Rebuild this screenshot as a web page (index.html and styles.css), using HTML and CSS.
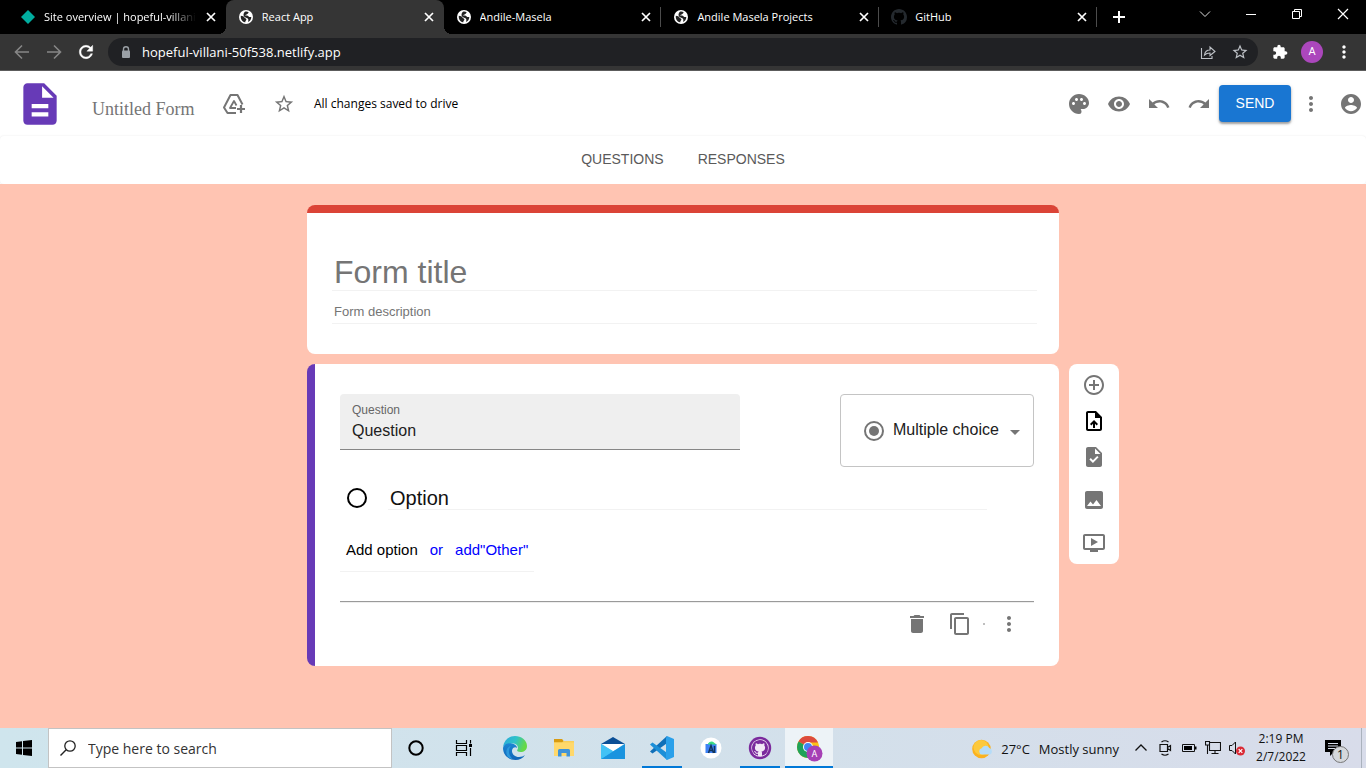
FILE: index.html
```
<!DOCTYPE html>
<html lang="en">
<head>
<meta charset="utf-8">
<meta name="viewport" content="width=device-width, initial-scale=1">
<title>React App</title>
<link rel="stylesheet" href="styles.css">
</head>
<body class="desktop">
<svg class="sprite" aria-hidden="true">
  <symbol id="i-globe" viewBox="0 0 14 14"><circle cx="7" cy="7" r="7" fill="#fff"/><path d="M1.800 5.800 C3.500 6 5 6.400 5.400 7.400 C6 8.200 7.600 8.200 7.400 9.600 C7.200 10.600 6.200 11 6.200 12.400 C3.400 12 1.400 9.400 1.800 5.800Z" fill="#222"/><path d="M5.600 1.900 C7 1.400 8.600 1.600 9.600 2.200 C9.600 3.200 8.800 3.400 8.200 4 C7.600 4.800 6.200 4.600 6.200 5.600 C7.600 5.600 9 5.400 9.600 6.400 C10.200 7.200 11 7.200 12.300 7 C12.300 9.400 10.800 11.400 9 12 C9.400 10.600 9.600 9.600 8.800 8.600 C7.600 7.800 5.600 7.600 4.800 6 C4.200 4.600 4.600 3 5.600 1.900Z" fill="#222"/></symbol>
  <symbol id="i-x" viewBox="0 0 12 12"><path d="M2 2l8 8M10 2l-8 8" stroke="currentColor" stroke-width="1.700" fill="none"/></symbol>
  <symbol id="i-github" viewBox="0 0 16 16"><path fill="currentColor" d="M8 0C3.58 0 0 3.58 0 8c0 3.54 2.29 6.53 5.47 7.59.4.07.55-.17.55-.38 0-.19-.01-.82-.01-1.49-2.01.37-2.53-.49-2.69-.94-.09-.23-.48-.94-.82-1.13-.28-.15-.68-.52-.01-.53.63-.01 1.08.58 1.23.82.72 1.21 1.87.87 2.33.66.07-.52.28-.87.51-1.07-1.78-.2-3.64-.89-3.64-3.95 0-.87.31-1.59.82-2.15-.08-.2-.36-1.02.08-2.12 0 0 .67-.21 2.2.82.64-.18 1.32-.27 2-.27.68 0 1.36.09 2 .27 1.53-1.04 2.2-.82 2.2-.82.44 1.1.16 1.92.08 2.12.51.56.82 1.27.82 2.15 0 3.07-1.87 3.75-3.65 3.95.29.25.54.73.54 1.48 0 1.07-.01 1.93-.01 2.2 0 .21.15.46.55.38A8.013 8.013 0 0016 8c0-4.42-3.58-8-8-8z"/></symbol>
  <symbol id="i-star" viewBox="0 0 24 24"><path fill="currentColor" d="M22 9.24l-7.19-.62L12 2 9.19 8.63 2 9.24l5.46 4.73L5.82 21 12 17.27 18.18 21l-1.63-7.03L22 9.24zM12 15.4l-3.76 2.27 1-4.28-3.32-2.88 4.38-.38L12 6.1l1.71 4.04 4.38.38-3.32 2.88 1 4.28L12 15.4z"/></symbol>
  <symbol id="i-more" viewBox="0 0 24 24"><path fill="currentColor" d="M12 8c1.1 0 2-.9 2-2s-.9-2-2-2-2 .9-2 2 .9 2 2 2zm0 2c-1.1 0-2 .9-2 2s.9 2 2 2 2-.9 2-2-.9-2-2-2zm0 6c-1.1 0-2 .9-2 2s.9 2 2 2 2-.9 2-2-.9-2-2-2z"/></symbol>
</svg>

<div class="tabstrip">
  <div class="tabs">
    <div class="tab">
      <svg class="favicon" viewBox="0 0 16 16"><path d="M8 0l8 8-8 8-8-8z" fill="#00ad9f"/></svg>
      <span class="tab-title tab-title-fade">Site overview | hopeful-villani</span>
      <button class="tab-close" aria-label="Close tab"><svg class="ico12"><use href="#i-x"/></svg></button>
    </div>
    <div class="tab tab-active">
      <svg class="favicon"><use href="#i-globe"/></svg>
      <span class="tab-title">React App</span>
      <button class="tab-close" aria-label="Close tab"><svg class="ico12"><use href="#i-x"/></svg></button>
    </div>
    <div class="tab tab-divided">
      <svg class="favicon"><use href="#i-globe"/></svg>
      <span class="tab-title">Andile-Masela</span>
      <button class="tab-close" aria-label="Close tab"><svg class="ico12"><use href="#i-x"/></svg></button>
    </div>
    <div class="tab tab-divided">
      <svg class="favicon"><use href="#i-globe"/></svg>
      <span class="tab-title">Andile Masela Projects</span>
      <button class="tab-close" aria-label="Close tab"><svg class="ico12"><use href="#i-x"/></svg></button>
    </div>
    <div class="tab tab-divided">
      <svg class="favicon favicon-github"><use href="#i-github"/></svg>
      <span class="tab-title">GitHub</span>
      <button class="tab-close" aria-label="Close tab"><svg class="ico12"><use href="#i-x"/></svg></button>
    </div>
  </div>
  <button class="new-tab" aria-label="New tab"><svg class="ico12" viewBox="0 0 12 12"><path d="M6 0v12M0 6h12" stroke="#fff" stroke-width="2"/></svg></button>
  <div class="window-controls">
    <button class="win-btn" aria-label="Search tabs"><svg class="ico12" viewBox="0 0 12 12"><path d="M1 3.500l5 5 5-5" fill="none" stroke="#ddd"/></svg></button>
    <button class="win-btn" aria-label="Minimize"><svg class="ico12" viewBox="0 0 12 12"><path d="M1 6.500h10" stroke="#fff"/></svg></button>
    <button class="win-btn" aria-label="Restore"><svg class="ico12" viewBox="0 0 12 12"><path d="M1.500 3.500h7v7h-7zM3.500 3.500v-2h7v7h-2" fill="none" stroke="#fff"/></svg></button>
    <button class="win-btn" aria-label="Close"><svg class="ico12" viewBox="0 0 12 12"><path d="M1 1l10 10M11 1L1 11" stroke="#fff" stroke-width="1.200"/></svg></button>
  </div>
</div>

<div class="toolbar">
  <button class="tool-btn tool-dim" aria-label="Back"><svg class="ico16" viewBox="0 0 16 16"><path d="M15 8H2M8 1.500L1.500 8 8 14.500" fill="none" stroke="currentColor" stroke-width="1.600"/></svg></button>
  <button class="tool-btn tool-dim" aria-label="Forward"><svg class="ico16" viewBox="0 0 16 16"><path d="M1 8h13M8 1.500L14.500 8 8 14.500" fill="none" stroke="currentColor" stroke-width="1.600"/></svg></button>
  <button class="tool-btn" aria-label="Reload"><svg class="ico20" viewBox="0 0 24 24"><path fill="currentColor" stroke="currentColor" stroke-width=".5" d="M17.650 6.350C16.200 4.900 14.210 4 12 4c-4.420 0-7.990 3.580-7.990 8s3.570 8 7.990 8c3.730 0 6.840-2.550 7.730-6h-2.080c-.82 2.330-3.040 4-5.650 4-3.310 0-6-2.690-6-6s2.690-6 6-6c1.660 0 3.140.69 4.220 1.780L13 11h7V4l-2.350 2.350z"/></svg></button>
  <div class="omnibox">
    <svg class="ico12 lock" viewBox="0 0 12 12"><path d="M3.500 5V3.200a2.500 2.500 0 0 1 5 0V5" fill="none" stroke="#9aa0a6" stroke-width="1.400"/><rect x="2" y="4.500" width="8" height="7.500" rx="1" fill="#9aa0a6"/></svg>
    <input class="url" aria-label="Address" value="hopeful-villani-50f538.netlify.app">
    <button class="tool-btn tool-soft" aria-label="Share"><svg class="ico16" viewBox="0 0 16 16"><path d="M1.500 4v10.500h10.500V12M4.500 11c.5-3.500 2.500-5 5.500-5V3l5 4.500-5 4V9C7.500 9 6 9.500 4.500 11z" fill="none" stroke="currentColor" stroke-width="1.100"/></svg></button>
    <button class="tool-btn tool-soft" aria-label="Bookmark"><svg class="ico18"><use href="#i-star"/></svg></button>
  </div>
  <button class="tool-btn" aria-label="Extensions"><svg class="ico16" viewBox="0 0 24 24"><path fill="currentColor" d="M20.500 11H19V7c0-1.100-.9-2-2-2h-4V3.500C13 2.120 11.880 1 10.500 1S8 2.120 8 3.500V5H4c-1.100 0-1.990.9-1.990 2v3.800H3.500c1.490 0 2.700 1.210 2.700 2.700s-1.210 2.700-2.700 2.700H2V20c0 1.100.9 2 2 2h3.800v-1.500c0-1.490 1.210-2.700 2.700-2.700 1.490 0 2.700 1.210 2.700 2.700V22H17c1.100 0 2-.9 2-2v-4h1.500c1.380 0 2.500-1.120 2.500-2.500S21.880 11 20.500 11z"/></svg></button>
  <button class="tool-btn" aria-label="Profile"><span class="avatar">A</span></button>
  <button class="tool-btn" aria-label="Menu"><svg class="ico20"><use href="#i-more"/></svg></button>
</div>

<header class="form-header">
  <svg class="logo" viewBox="0 0 24 24"><path fill="#673ab7" d="M14 2H6c-1.100 0-1.990.9-1.990 2L4 20c0 1.100.89 2 1.990 2H18c1.100 0 2-.9 2-2V8l-6-6zm2 16H8v-2h8v2zm0-4H8v-2h8v2zm-3-5V3.500L18.500 9H13z"/></svg>
  <input class="doc-name" aria-label="Form name" placeholder="Untitled Form">
  <button class="icon-btn" aria-label="Add to drive"><svg class="ico24" viewBox="0 0 24 24"><g fill="none" stroke="currentColor" stroke-width="2" stroke-linejoin="round"><path d="M14 21H5.500L2 15.500 8.500 3h7l5 9.500"/><path d="M14 16H8l4-7 2.500 4.500" stroke-width="1.800"/></g><path d="M19 13v8M15 17h8" stroke="currentColor" stroke-width="2.200"/></svg></button>
  <button class="icon-btn icon-star" aria-label="Star"><svg class="ico22"><use href="#i-star"/></svg></button>
  <span class="saved">All changes saved to drive</span>
  <div class="header-actions">
    <button class="icon-btn" aria-label="Theme"><svg class="ico24" viewBox="0 0 24 24"><path fill="currentColor" d="M12 2C6.490 2 2 6.490 2 12s4.490 10 10 10a2.500 2.500 0 0 0 2.500-2.500c0-.61-.23-1.200-.64-1.670-.08-.1-.13-.21-.13-.33 0-.28.22-.5.5-.5H16c3.310 0 6-2.690 6-6 0-4.960-4.490-9-10-9zm5.500 11c-.83 0-1.500-.67-1.500-1.500s.67-1.500 1.500-1.500 1.500.67 1.500 1.500-.67 1.500-1.500 1.500zm-3-4c-.83 0-1.500-.67-1.500-1.500S13.670 6 14.500 6s1.500.67 1.500 1.500S15.330 9 14.500 9zM5 11.500c0-.83.67-1.500 1.500-1.500s1.500.67 1.500 1.500S7.330 13 6.500 13 5 12.330 5 11.500zm6-4c0 .83-.67 1.500-1.500 1.500S8 8.330 8 7.500 8.670 6 9.500 6s1.500.67 1.500 1.500z"/></svg></button>
    <button class="icon-btn" aria-label="Preview"><svg class="ico24" viewBox="0 0 24 24"><path fill="currentColor" d="M12 4.500C7 4.500 2.730 7.610 1 12c1.730 4.390 6 7.500 11 7.500s9.270-3.110 11-7.500c-1.730-4.390-6-7.500-11-7.500zM12 17c-2.760 0-5-2.240-5-5s2.240-5 5-5 5 2.240 5 5-2.240 5-5 5zm0-8c-1.660 0-3 1.340-3 3s1.340 3 3 3 3-1.340 3-3-1.340-3-3-3z"/></svg></button>
    <button class="icon-btn" aria-label="Undo"><svg class="ico24" viewBox="0 0 24 24"><path fill="currentColor" d="M12.500 8c-2.650 0-5.050.99-6.900 2.600L2 7v9h9l-3.620-3.620c1.390-1.160 3.160-1.880 5.120-1.880 3.540 0 6.550 2.310 7.600 5.500l2.370-.78C21.080 11.030 17.150 8 12.500 8z"/></svg></button>
    <button class="icon-btn" aria-label="Redo"><svg class="ico24" viewBox="0 0 24 24"><path fill="currentColor" d="M18.400 10.600C16.550 8.990 14.150 8 11.500 8c-4.650 0-8.580 3.030-9.960 7.220L3.900 16c1.050-3.190 4.050-5.500 7.600-5.500 1.950 0 3.730.72 5.120 1.880L13 16h9V7l-3.600 3.600z"/></svg></button>
    <button class="send">SEND</button>
    <button class="icon-btn" aria-label="More options"><svg class="ico24"><use href="#i-more"/></svg></button>
    <button class="icon-btn" aria-label="Account"><svg class="ico24" viewBox="0 0 24 24"><path fill="currentColor" d="M12 2C6.480 2 2 6.480 2 12s4.480 10 10 10 10-4.480 10-10S17.520 2 12 2zm0 3c1.660 0 3 1.340 3 3s-1.340 3-3 3-3-1.340-3-3 1.340-3 3-3zm0 14.200c-2.500 0-4.710-1.280-6-3.220.03-1.990 4-3.080 6-3.080 1.990 0 5.970 1.090 6 3.080-1.290 1.940-3.500 3.220-6 3.220z"/></svg></button>
  </div>
</header>

<nav class="form-tabs">
  <button class="form-tab">QUESTIONS</button>
  <button class="form-tab">RESPONSES</button>
</nav>

<main class="canvas">
  <section class="card card-title">
    <input class="form-title" aria-label="Form title" placeholder="Form title">
    <input class="form-desc" aria-label="Form description" placeholder="Form description">
  </section>

  <section class="card card-question">
    <div class="question-row">
      <div class="field">
        <label class="field-label" for="question">Question</label>
        <input class="field-input" id="question" value="Question">
      </div>
      <div class="type-box">
        <svg class="ico24 type-icon" viewBox="0 0 24 24"><circle cx="12" cy="12" r="9" fill="none" stroke="currentColor" stroke-width="2"/><circle cx="12" cy="12" r="5" fill="currentColor"/></svg>
        <select class="type-select" aria-label="Question type"><option>Multiple choice</option></select>
        <svg class="caret" viewBox="0 0 10 8"><path d="M0 3h10L5 8z" fill="currentColor"/></svg>
      </div>
    </div>
    <div class="option-row">
      <input class="option-radio" type="radio" aria-label="Option">
      <input class="option-input" aria-label="Option text" value="Option">
    </div>
    <div class="add-row">
      <button class="add-btn">Add option</button>
      <span class="add-or">or</span>
      <button class="add-btn add-other">add"Other"</button>
    </div>
    <hr class="rule">
    <div class="card-footer">
      <button class="plain-btn" aria-label="Delete"><svg class="ico24" viewBox="0 0 24 24"><path fill="currentColor" d="M6 19c0 1.100.9 2 2 2h8c1.100 0 2-.9 2-2V7H6v12zM19 4h-3.500l-1-1h-5l-1 1H5v2h14V4z"/></svg></button>
      <button class="plain-btn" aria-label="Duplicate"><svg class="ico24" viewBox="0 0 24 24"><path fill="currentColor" d="M16 1H4c-1.100 0-2 .9-2 2v14h2V3h12V1zm3 4H8c-1.100 0-2 .9-2 2v14c0 1.100.9 2 2 2h11c1.100 0 2-.9 2-2V7c0-1.100-.9-2-2-2zm0 16H8V7h11v14z"/></svg></button>
      <span class="dot"></span>
      <button class="plain-btn" aria-label="More"><svg class="ico24"><use href="#i-more"/></svg></button>
    </div>
  </section>

  <aside class="side-tools">
    <div class="side-group">
      <button class="plain-btn" aria-label="Add question"><svg class="ico24" viewBox="0 0 24 24"><path fill="currentColor" d="M13 7h-2v4H7v2h4v4h2v-4h4v-2h-4V7zm-1-5C6.480 2 2 6.480 2 12s4.480 10 10 10 10-4.480 10-10S17.520 2 12 2zm0 18c-4.410 0-8-3.590-8-8s3.590-8 8-8 8 3.590 8 8-3.590 8-8 8z"/></svg></button>
      <button class="plain-btn plain-dark" aria-label="Upload file"><svg class="ico24" viewBox="0 0 24 24"><path fill="currentColor" d="M14 2H6c-1.100 0-1.990.9-1.990 2L4 20c0 1.100.89 2 1.990 2H18c1.100 0 2-.9 2-2V8l-6-6zm4 18H6V4h7v5h5v11zM8 15.010l1.410 1.410L11 14.840V19h2v-4.160l1.590 1.590L16 15.010 12.010 11z"/></svg></button>
      <button class="plain-btn" aria-label="Add section"><svg class="ico24" viewBox="0 0 24 24"><path fill="currentColor" d="M14 2H6c-1.100 0-1.990.9-1.990 2L4 20c0 1.100.89 2 1.990 2H18c1.100 0 2-.9 2-2V8l-6-6zm-3.060 16L7.400 14.460l1.410-1.410 2.120 2.120 4.240-4.240 1.410 1.410L10.940 18zM13 9V3.500L18.500 9H13z"/></svg></button>
    </div>
    <div class="side-group side-media">
      <button class="plain-btn" aria-label="Add image"><svg class="ico24" viewBox="0 0 24 24"><path fill="currentColor" d="M21 19V5c0-1.100-.9-2-2-2H5c-1.100 0-2 .9-2 2v14c0 1.100.9 2 2 2h14c1.100 0 2-.9 2-2zM8.500 13.500l2.500 3.010L14.500 12l4.500 6H5l3.500-4.500z"/></svg></button>
      <button class="plain-btn" aria-label="Add video"><svg class="ico24" viewBox="0 0 24 24"><path fill="currentColor" d="M21 3H3c-1.110 0-2 .89-2 2v12c0 1.100.89 2 2 2h5v2h8v-2h5c1.100 0 1.990-.9 1.990-2L23 5c0-1.110-.9-2-2-2zm0 14H3V5h18v12zm-5-6l-7 4V7z"/></svg></button>
    </div>
  </aside>
</main>

<footer class="taskbar">
  <button class="task" aria-label="Start"><svg class="ico16" viewBox="0 0 16 16"><path d="M0 2l6-.8v6.300H0zM7 1l9-1v7.500H7zM0 8.500h6v6.300L0 14zM7 8.500h9V16l-9-1z" fill="#000"/></svg></button>
  <div class="search">
    <svg class="ico18" viewBox="0 0 18 18"><circle cx="11" cy="7" r="5.200" fill="none" stroke="#222" stroke-width="1.300"/><path d="M7.200 10.800L1.500 16.500" stroke="#222" stroke-width="1.400"/></svg>
    <input class="search-input" aria-label="Search" placeholder="Type here to search">
  </div>
  <button class="task" aria-label="Cortana"><svg class="ico16" viewBox="0 0 16 16"><circle cx="8" cy="8" r="6.700" fill="none" stroke="#000" stroke-width="2"/></svg></button>
  <button class="task" aria-label="Task view"><svg class="ico18" viewBox="0 0 18 18"><path d="M1.500 1v3.500h10V1M1.500 17v-3.500h10V17M1.500 6.500h10v5h-10zM15.500 1v3.500M15.500 9v8" fill="none" stroke="#000" stroke-width="1.200"/><path d="M14 5h3v3h-3z"/></svg></button>
  <div class="apps">
    <button class="task" aria-label="Edge"><svg class="ico24" viewBox="0 0 24 24"><defs><linearGradient id="eg" x1="0" x2="1" y1="0" y2=".3"><stop offset="0" stop-color="#2aa7dc"/><stop offset=".55" stop-color="#2fc2c9"/><stop offset="1" stop-color="#66d947"/></linearGradient><linearGradient id="eb" x1="0" y1="0" x2="0" y2="1"><stop offset="0" stop-color="#1b86d4"/><stop offset="1" stop-color="#1165b7"/></linearGradient></defs><path d="M0 11C1 4 6 0 12 0s12 4 12 10c0 4-3 6-6.500 6-3 0-4-1-3-2.500C16 11 14 7.500 9.500 7.500 5 7.500 1 9 0 11z" fill="url(#eg)"/><path d="M0 12C1 8 5 7 8.500 7.400c3 .3 5.500 2.300 5.700 4.600-1.500-1.600-5-.8-5.200 2.600-.2 3.500 3 6.400 7 6.400 2.500 0 4.500-1 6-2-2 3.500-5.600 5-9.500 5C5.500 24 0 19 0 12z" fill="url(#eb)"/><path d="M8 10c-3 3-3 8.500 1.500 13-1.500-.2-3.500-1-5-2.500C2 16 3.500 11 8 10z" fill="#2a98dc"/></svg></button>
    <button class="task" aria-label="File Explorer"><svg class="ico22" viewBox="0 0 22 22"><path d="M1 2h8l1.500 2H21v15H1z" fill="#f9cf5b"/><path d="M1 2h8l1.500 2L9 5.500H1z" fill="#d89b12"/><path d="M1 5.500h20V19H1z" fill="#ffd86b"/><path d="M5 19.500v-6q0-1.500 1.500-1.500h9q1.500 0 1.500 1.500v6h-3.500v-3.500h-5v3.500z" fill="#3f93d8"/></svg></button>
    <button class="task" aria-label="Mail"><svg class="ico24" viewBox="0 0 24 24"><path d="M0 8l12-7 12 7z" fill="#0b4f96"/><path d="M1.500 8h21L12 16z" fill="#fff"/><path d="M0 8l12 7.500L24 8v15H0z" fill="#35b6f2"/><path d="M0 23L24 8v15z" fill="#1a94df"/><path d="M0 8v15l16-10.500-4 2.500z" fill="#42c2f5"/></svg></button>
    <button class="task task-open" aria-label="Visual Studio Code"><svg class="ico24" viewBox="0 0 24 24"><path d="M17 0L0 15.500l2.500 2L18 6.500z" fill="#0f6fb8"/><path d="M17 24L0 8.500l2.500-2L18 17.500z" fill="#1c8fd8"/><path d="M17 0l7 3v18l-7 3-1-1.500V2z" fill="#2aa0ea"/></svg></button>
    <button class="task" aria-label="Android Studio"><svg class="ico22" viewBox="0 0 22 22"><circle cx="11" cy="11" r="10.500" fill="#fff"/><path d="M5.500 7h11v9h-11z" fill="#3d82f5"/><path d="M8 6.500q3-3.500 6.500-.5l2 1.500H8z" fill="#3ddc84"/><path d="M8.500 16l2.500-7.500L13.500 16M9.500 13.500h3M14.500 9v7" fill="none" stroke="#12345b" stroke-width="1.500"/></svg></button>
    <button class="task task-open" aria-label="GitHub Desktop"><svg class="ico24" viewBox="0 0 24 24"><circle cx="12" cy="12" r="11.200" fill="#7b2a9d"/><circle cx="12" cy="12" r="8.700" fill="#f2e8f6"/><svg x="4" y="4" width="16" height="16" color="#7b2a9d"><use href="#i-github"/></svg></svg></button>
    <button class="task task-open task-active" aria-label="Chrome"><svg class="ico28" viewBox="0 0 28 28"><circle cx="13" cy="13" r="11" fill="#fbc116"/><path d="M13 13L3.500 7.500A11 11 0 0 1 23 8.500H13z" fill="#dd4b3e"/><path d="M13 13L3.500 7.500A11 11 0 0 0 13 24l4-8.500z" fill="#1fa25a"/><circle cx="13" cy="13" r="5" fill="#fff"/><circle cx="13" cy="13" r="4" fill="#4285f4"/><circle cx="19.500" cy="19.500" r="8" fill="#a640b5"/><text x="19.500" y="23" text-anchor="middle" class="badge-letter">A</text></svg></button>
  </div>
  <div class="tray">
    <button class="weather"><svg class="ico20" viewBox="0 0 20 20"><circle cx="9.500" cy="10" r="9.300" fill="#fbb21f"/><circle cx="9" cy="8.500" r="7.500" fill="#fdc93c"/><path d="M10 15.500a3.200 3.200 0 0 1-.3-6.300 4.200 4.200 0 0 1 7.600-.2 3.300 3.300 0 0 1-.3 6.500z" fill="#b5dcf8"/></svg><span>27°C</span><span>Mostly sunny</span></button>
    <div class="tray-icons">
      <button class="tray-btn" aria-label="Show hidden icons"><svg class="ico16" viewBox="0 0 16 16"><path d="M2.500 10.500L8 5l5.500 5.500" fill="none" stroke="#111" stroke-width="1.300"/></svg></button>
      <button class="tray-btn" aria-label="Meet now"><svg class="ico16" viewBox="0 0 16 16"><path d="M3 4.500h7.500v7H3zM10.500 7.500l3-2v5l-3-2M4.500 2q3.500-2.500 7 0M4.500 14q3.500 2.500 7 0" fill="none" stroke="#111" stroke-width="1.200"/></svg></button>
      <button class="tray-btn" aria-label="Battery"><svg class="ico16" viewBox="0 0 16 16"><path d="M1.500 4.500h12v7h-12z" fill="none" stroke="#111"/><path d="M3 6h8v4H3zM14 6.500h1.500v3H14z"/></svg></button>
      <button class="tray-btn" aria-label="Network"><svg class="ico16" viewBox="0 0 16 16"><path d="M5 2.500h10.500v8H4.500V5M0.500 1.500h4V5h-4zM2.500 5v9M10 10.500v3M6.500 13.500h7" fill="none" stroke="#111" stroke-width="1.100"/></svg></button>
      <button class="tray-btn" aria-label="Sound muted"><svg class="ico16" viewBox="0 0 16 16"><path d="M.5 5.500H3L6.500 2v12L3 10.500H.5z" fill="none" stroke="#111"/><circle cx="11.500" cy="11" r="4.500" fill="#da2a35"/><path d="M9.700 9.200l3.600 3.600M13.300 9.200l-3.600 3.600" stroke="#fff" stroke-width="1.200"/></svg></button>
    </div>
    <button class="clock"><span>2:19 PM</span><span>2/7/2022</span></button>
    <button class="notify" aria-label="Notifications"><svg class="ico18" viewBox="0 0 18 18"><path d="M1 1h16v12h-7l-4 4v-4H1z"/><path d="M4 4.500h10M4 7h10M4 9.500h7" stroke="#d8deeb"/></svg><span class="notify-count">1</span></button>
  </div>
</footer>
</body>
</html>
```
FILE: styles.css
```
* { box-sizing: border-box; }
body { margin: 0; }
button { border: 0; padding: 0; background: none; color: inherit; font: inherit; cursor: pointer; }
input { border: 0; background: none; border-radius: 0; outline: 0; min-width: 0; }
svg { display: block; flex: none; }

.desktop { display: flex; flex-direction: column; min-height: 100vh; background: #fff; font-family: "Liberation Sans", Arial, sans-serif; }
.sprite { position: absolute; width: 0; height: 0; }

.ico12 { width: 12px; height: 12px; }
.ico16 { width: 16px; height: 16px; }
.ico18 { width: 18px; height: 18px; }
.ico20 { width: 20px; height: 20px; }
.ico22 { width: 22px; height: 22px; }
.ico24 { width: 24px; height: 24px; }
.ico28 { width: 28px; height: 28px; }

/* Browser tab strip */
.tabstrip { display: flex; height: 34px; padding-left: 8px; background: #000; color: #fff; font: 11px/16px "Open Sans", "Segoe UI", sans-serif; }
.tabs { display: flex; flex: 0 1 1089px; min-width: 0; }
.tab { position: relative; display: flex; flex: 1 1 0; align-items: center; gap: 8px; min-width: 0; padding: 0 8px 0 12px; }
.tab-active { background: #353535; border-radius: 8px 8px 0 0; }
.tab-active::before, .tab-active::after { content: ""; position: absolute; bottom: 0; width: 8px; height: 8px; }
.tab-active::before { left: -8px; background: radial-gradient(circle at 0 0, #000 8px, #353535 8px); }
.tab-active::after { right: -8px; background: radial-gradient(circle at 100% 0, #000 8px, #353535 8px); }
.tab-divided::after { content: ""; position: absolute; right: 0; top: 7px; width: 1px; height: 20px; background: #4c4c4c; }
.favicon { width: 16px; height: 16px; padding: 1px; }
.favicon-github { color: #24292e; padding: 0; }
.tab-title { flex: 1; min-width: 0; overflow: hidden; white-space: nowrap; }
.tab-title-fade { -webkit-mask-image: linear-gradient(90deg, #000 82%, transparent); mask-image: linear-gradient(90deg, #000 82%, transparent); }
.tab-close { display: grid; place-items: center; width: 14px; height: 16px; }
.new-tab { display: grid; place-items: center; width: 44px; }
.window-controls { display: flex; margin-left: auto; height: 28px; }
.win-btn { display: grid; place-items: center; width: 46px; }

/* Browser toolbar */
.toolbar { display: flex; align-items: center; height: 37px; padding: 0 6px; background: #353535; border-bottom: 1px solid #5c5c5c; color: #fff; }
.tool-btn { display: grid; place-items: center; flex: none; width: 32px; height: 28px; }
.tool-dim { color: #868686; }
.tool-soft { color: #bdc1c6; }
.omnibox { display: flex; flex: 1; align-items: center; height: 28px; margin: 0 6px; padding: 0 2px 0 12px; border-radius: 14px; background: #202124; }
.lock { margin-right: 10px; }
.url { flex: 1; padding: 0; color: #fff; font: 13px/20px "Open Sans", "Segoe UI", sans-serif; }
.avatar { display: grid; place-items: center; width: 22px; height: 22px; border-radius: 50%; background: #ab47bc; font: 11px/16px Roboto, sans-serif; }

/* Form header */
.form-header { display: flex; align-items: center; height: 65px; padding-left: 15px; overflow: hidden; color: #757575; }
.logo { width: 50px; height: 50px; }
.doc-name { width: 124px; margin-left: 25px; padding: 10px 2px 0; font: 18px/20px "Liberation Serif", "Times New Roman", serif; }
.doc-name::placeholder, .form-title::placeholder, .form-desc::placeholder { color: #757575; opacity: 1; }
.icon-btn { display: grid; place-items: center; flex: none; width: 40px; height: 40px; }
.icon-star { margin: 0 10px; }
.saved { color: #000; font: 12px/16px "Open Sans", "Segoe UI", sans-serif; white-space: nowrap; }
.header-actions { display: flex; align-items: center; margin: 0 -5px 0 auto; }
.send { width: 72px; height: 37px; padding-bottom: 1px; border-radius: 4px; background: #1976d2; color: #fff; font-size: 14px; box-shadow: 0 2px 2px rgba(0, 0, 0, .3), 0 1px 4px rgba(0, 0, 0, .15); }

.form-tabs { display: flex; justify-content: center; height: 48px; border-radius: 4px; box-shadow: 0 0 2px rgba(0, 0, 0, .1); color: #5a5a5a; }
.form-tab { padding: 0 17px 2px; font-size: 14px; }

/* Canvas */
.canvas { display: grid; flex: 1; grid-template-columns: 1fr minmax(0, 752px) 1fr; align-content: start; align-items: start; row-gap: 10px; column-gap: 10px; padding: 21px 10px; background: #ffc4b2; }
.card { grid-column: 2; border-radius: 8px; background: #fff; }
.card-title { display: flex; flex-direction: column; gap: 10px; padding: 40px 22px 30px 25px; border-top: 8px solid #db4437; }
.form-title { height: 38px; padding: 1px 2px 0; border-bottom: 1px solid #f2f2f2; font: 32px/36px "Liberation Sans", Arial, sans-serif; }
.form-desc { height: 23px; padding: 0 2px 2px; border-bottom: 1px solid #f2f2f2; font: 13px/20px "Liberation Sans", Arial, sans-serif; }

.card-question { padding: 30px 25px; border-left: 8px solid #673ab7; }
.question-row { display: flex; justify-content: space-between; align-items: flex-start; gap: 20px; }
.field { display: flex; flex: 0 1 400px; flex-direction: column; height: 56px; padding: 8px 12px; border-bottom: 1px solid #868686; border-radius: 4px 4px 0 0; background: #efefef; }
.field-label { color: #666; font-size: 12px; line-height: 16px; }
.field-input { padding: 1px 0 0; color: #212121; font: 16px/24px "Liberation Sans", Arial, sans-serif; }
.type-box { display: flex; align-items: center; flex: none; width: 194px; height: 73px; padding: 0 13px 0 21px; border: 1px solid #c4c4c4; border-radius: 4px; color: #757575; }
.type-select { flex: 1; min-width: 0; padding: 0 0 2px 7px; border: 0; appearance: none; background: none; color: #212121; font: 16px/24px "Liberation Sans", Arial, sans-serif; }
.caret { width: 10px; height: 8px; }

.option-row { display: flex; align-items: center; gap: 21px; margin: 19px 47px 0 7px; }
.option-radio { appearance: none; flex: none; width: 20px; height: 20px; margin: 0; border: 2px solid #000; border-radius: 50%; }
.option-input { flex: 1; height: 24px; padding: 1px 2px 0; border-bottom: 1px solid #f2f2f2; color: #111; font: 20px/22px "Liberation Sans", Arial, sans-serif; }
.add-row { display: flex; align-items: center; gap: 12px; width: fit-content; height: 44px; margin-top: 18px; padding: 0 6px; border-bottom: 1px solid #f2f2f2; font-size: 15px; }
.add-btn { color: #000; }
.add-or, .add-other { color: #00f; }
.rule { margin: 29px 0 0; border: 0; border-top: 1px solid #9a9a9a; border-bottom: 1px solid #eee; }
.card-footer { display: flex; align-items: center; justify-content: flex-end; gap: 19px; margin-top: 9px; padding-right: 13px; color: #757575; }
.plain-btn { width: 24px; height: 24px; }
.plain-dark { color: #000; }
.dot { width: 2px; height: 2px; margin: 0 -7px 0 -8px; border-radius: 50%; background: #aaa; }

.side-tools { display: flex; grid-column: 3; grid-row: 2; flex-direction: column; align-items: center; gap: 19px; width: 50px; padding: 9px 0; border-radius: 8px; background: #fff; color: #757575; }
.side-group { display: flex; flex-direction: column; gap: 12px; }
.side-media { gap: 19px; }

/* Taskbar */
.taskbar { display: flex; height: 40px; background: linear-gradient(90deg, #cfe5ed, #d2e1eb 50%, #d8dcea); color: #111; font: 14px/20px "Open Sans", "Segoe UI", sans-serif; }
.task { display: grid; place-items: center; flex: none; position: relative; width: 48px; height: 40px; }
.search { display: flex; align-items: center; gap: 11px; flex: 0 1 344px; min-width: 0; padding: 0 10px; border: 1px solid #c3c3c3; background: #fff; }
.search-input { flex: 1; padding: 2px 0 0; font: 14px/20px "Open Sans", "Segoe UI", sans-serif; }
.search-input::placeholder { color: #333; opacity: 1; }
.apps { display: flex; gap: 1px; margin-left: 3px; }
.task-open::after { content: ""; position: absolute; left: 4px; right: 4px; bottom: 0; height: 2px; background: #0078d7; }
.task-active { background: #edf3f7; }
.task-active::after { left: 0; right: 0; }
.badge-letter { fill: #fff; font: 9px Roboto, sans-serif; }
.tray { display: flex; margin-left: auto; padding-right: 4px; }
.weather { display: flex; align-items: center; gap: 9px; white-space: nowrap; padding: 2px 10px 0 0; font-size: 13px; }
.tray-icons { display: flex; }
.tray-btn { display: grid; place-items: center; width: 24px; }
.clock { display: flex; flex-direction: column; align-items: center; justify-content: center; width: 64px; font-size: 12px; line-height: 18px; }
.notify { position: relative; display: grid; place-items: center; width: 49px; padding-right: 8px; border-right: 1px solid #aab2bd; }
.notify-count { position: absolute; left: 19px; top: 18px; display: grid; place-items: center; width: 17px; height: 17px; border: 1px solid #777; border-radius: 50%; background: #d5d8dc; font-size: 12px; line-height: 15px; }
```
